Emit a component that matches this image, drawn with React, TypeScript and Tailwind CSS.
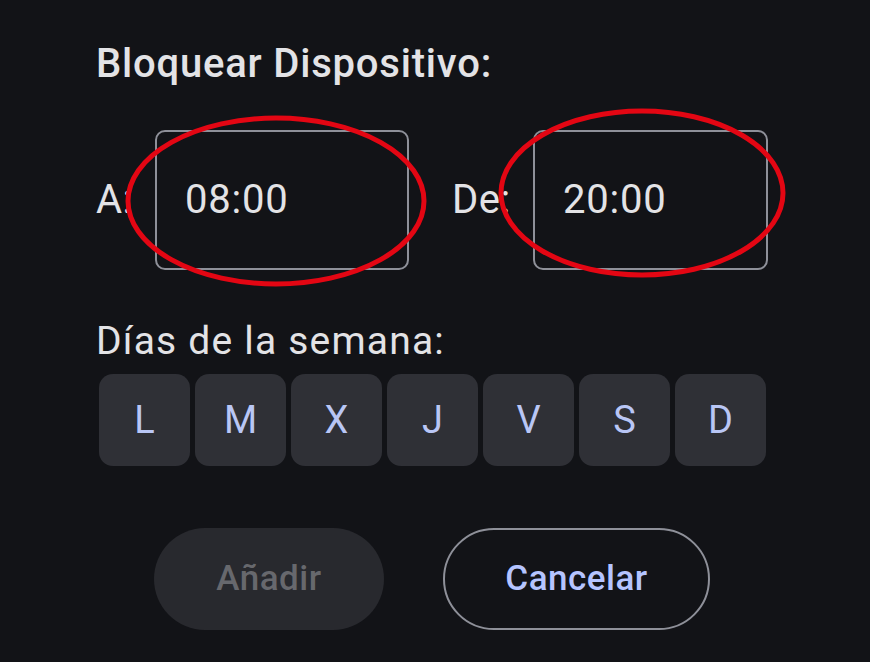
import React from "react";

const days = ["L", "M", "X", "J", "V", "S", "D"];

export default function App() {
    return (
        <div
            className="relative w-[870px] h-[662px] overflow-hidden bg-[#121317] text-[#e3e3e6]"
            style={{ fontFamily: "Roboto, 'Noto Sans', sans-serif" }}
        >
            <div className="pl-[96px] pt-[42px]">
                <h2 className="text-[40px] leading-[44px] font-medium tracking-[0.8px]">
                    Bloquear Dispositivo:
                </h2>

                {/* hora inicio / fin */}
                <div className="flex items-center mt-[44px] h-[140px]">
                    <span className="w-[59px] text-[40px] tracking-[0.5px]">A:</span>
                    <div className="w-[254px] h-[140px] rounded-[10px] border-2 border-[#8e9099] flex items-center pl-[28px] text-[40px] tracking-[0.8px]">
                        08:00
                    </div>
                    <span className="ml-[43px] w-[81px] text-[40px] tracking-[0.5px]">De:</span>
                    <div className="w-[235px] h-[140px] rounded-[10px] border-2 border-[#8e9099] flex items-center pl-[28px] text-[40px] tracking-[0.8px]">
                        20:00
                    </div>
                </div>

                <div className="mt-[48px] text-[39px] leading-[46px] tracking-[1.2px]">
                    Días de la semana:
                </div>

                <div className="flex gap-[5px] mt-[10px] ml-[3px]">
                    {days.map((d) => (
                        <button
                            key={d}
                            className="w-[91px] h-[92px] rounded-[14px] bg-[#2f3036] text-[#b9c6f5] text-[38px] flex items-center justify-center"
                        >
                            {d}
                        </button>
                    ))}
                </div>

                <div className="flex gap-[59px] mt-[62px] ml-[58px]">
                    <button className="w-[230px] h-[102px] rounded-full bg-[#28292e] text-[#67686d] text-[35px] font-medium tracking-[0.5px]">
                        Añadir
                    </button>
                    <button className="w-[267px] h-[102px] rounded-full border-2 border-[#8e9099] text-[#b5c4ff] text-[35px] font-medium tracking-[0.5px]">
                        Cancelar
                    </button>
                </div>
            </div>

            {/* anotaciones rojas */}
            <svg
                className="absolute inset-0 pointer-events-none"
                width="870"
                height="662"
                viewBox="0 0 870 662"
            >
                <ellipse cx="276" cy="201" rx="148" ry="83" fill="none" stroke="#e30613" strokeWidth="5" />
                <ellipse cx="642" cy="193" rx="141" ry="82" fill="none" stroke="#e30613" strokeWidth="5" />
            </svg>
        </div>
    );
}
